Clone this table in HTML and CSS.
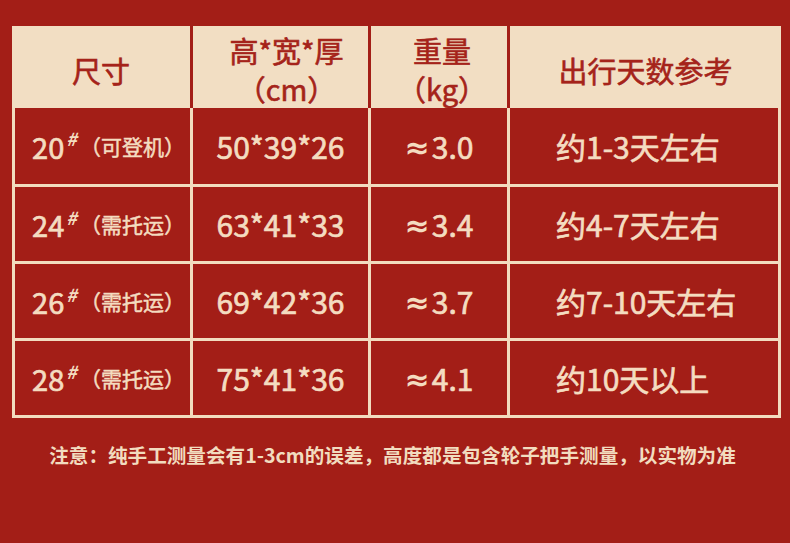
FILE: index.html
```html
<!DOCTYPE html>
<html lang="zh-CN">
<head>
<meta charset="utf-8">
<title>尺寸参考</title>
<link rel="stylesheet" href="styles.css">
</head>
<body>
<div class="page">
  <div class="head">
    <div class="hcell">尺寸</div>
    <div class="hcell two shift2"><span>高*宽*厚</span><span>（cm）</span></div>
    <div class="hcell two shift3"><span>重量</span><span>（kg）</span></div>
    <div class="hcell">出行天数参考</div>
  </div>
  <div class="body">
    <div class="cell size">20<sup>#</sup><small>（可登机）</small></div>
    <div class="cell">50*39*26</div>
    <div class="cell"><span class="approx">≈</span>3.0</div>
    <div class="cell days">约1-3天左右</div>

    <div class="cell size">24<sup>#</sup><small>（需托运）</small></div>
    <div class="cell">63*41*33</div>
    <div class="cell"><span class="approx">≈</span>3.4</div>
    <div class="cell days">约4-7天左右</div>

    <div class="cell size">26<sup>#</sup><small>（需托运）</small></div>
    <div class="cell">69*42*36</div>
    <div class="cell"><span class="approx">≈</span>3.7</div>
    <div class="cell days">约7-10天左右</div>

    <div class="cell size">28<sup>#</sup><small>（需托运）</small></div>
    <div class="cell">75*41*36</div>
    <div class="cell"><span class="approx">≈</span>4.1</div>
    <div class="cell days">约10天以上</div>
  </div>
  <p class="note">注意：纯手工测量会有1-3cm的误差，高度都是包含轮子把手测量，以实物为准</p>
</div>
</body>
</html>
```

FILE: styles.css
```css
html, body {
  margin: 0;
  padding: 0;
}
body {
  background: #a31e17;
  width: 790px;
  height: 543px;
  overflow: hidden;
  font-family: "Noto Sans CJK SC", "Noto Sans", sans-serif;
}
.page {
  padding: 26px 9px 0 12px;
}
.head {
  display: grid;
  grid-template-columns: 178px 175px 136px 271px;
  column-gap: 3px;
  height: 82px;
}
.hcell {
  background: #f2dec3;
  color: #a5231a;
  font-size: 29px;
  font-weight: 400;
  -webkit-text-stroke: 0.6px #a5231a;
  display: flex;
  align-items: center;
  justify-content: center;
  padding-top: 6px;
  box-sizing: border-box;
}
.hcell.two {
  flex-direction: column;
  line-height: 38px;
  padding-top: 4px;
}
.hcell.shift2 {
  padding-left: 12px;
}
.hcell.shift3 {
  padding-left: 6px;
}
.body {
  display: grid;
  grid-template-columns: 175px 175px 136px 268px;
  grid-template-rows: 76px 74px 74px 74px;
  gap: 3px;
  padding: 0 3px 3px 3px;
  background: #f2dcbf;
  width: 769px;
  box-sizing: border-box;
}
.cell {
  background: #a31e17;
  color: #f4dcc0;
  font-size: 30px;
  font-weight: 400;
  -webkit-text-stroke: 0.7px #f4dcc0;
  display: flex;
  align-items: center;
  justify-content: center;
}
.cell.size {
  font-size: 29px;
  padding-left: 12px;
}
.cell sup {
  font-size: 18px;
  font-style: italic;
  font-weight: 700;
  -webkit-text-stroke: 0;
  align-self: flex-start;
  margin-top: 21px;
  margin-left: 2px;
  line-height: 1;
}
.cell small {
  font-size: 21px;
  margin-left: 3px;
  -webkit-text-stroke: 0.5px #f4dcc0;
}
.approx {
  font-family: "Noto Sans", "DejaVu Sans", sans-serif;
  font-weight: 700;
  -webkit-text-stroke: 0;
  margin-right: 2px;
}
.cell.days {
  justify-content: flex-start;
  padding-left: 46px;
}
.note {
  margin: 23px 0 0 0;
  width: 761px;
  text-align: center;
  color: #f2dcbf;
  font-family: "Noto Sans CJK SC", sans-serif;
  font-size: 19.6px;
  font-weight: 700;
  line-height: 28px;
}
```
